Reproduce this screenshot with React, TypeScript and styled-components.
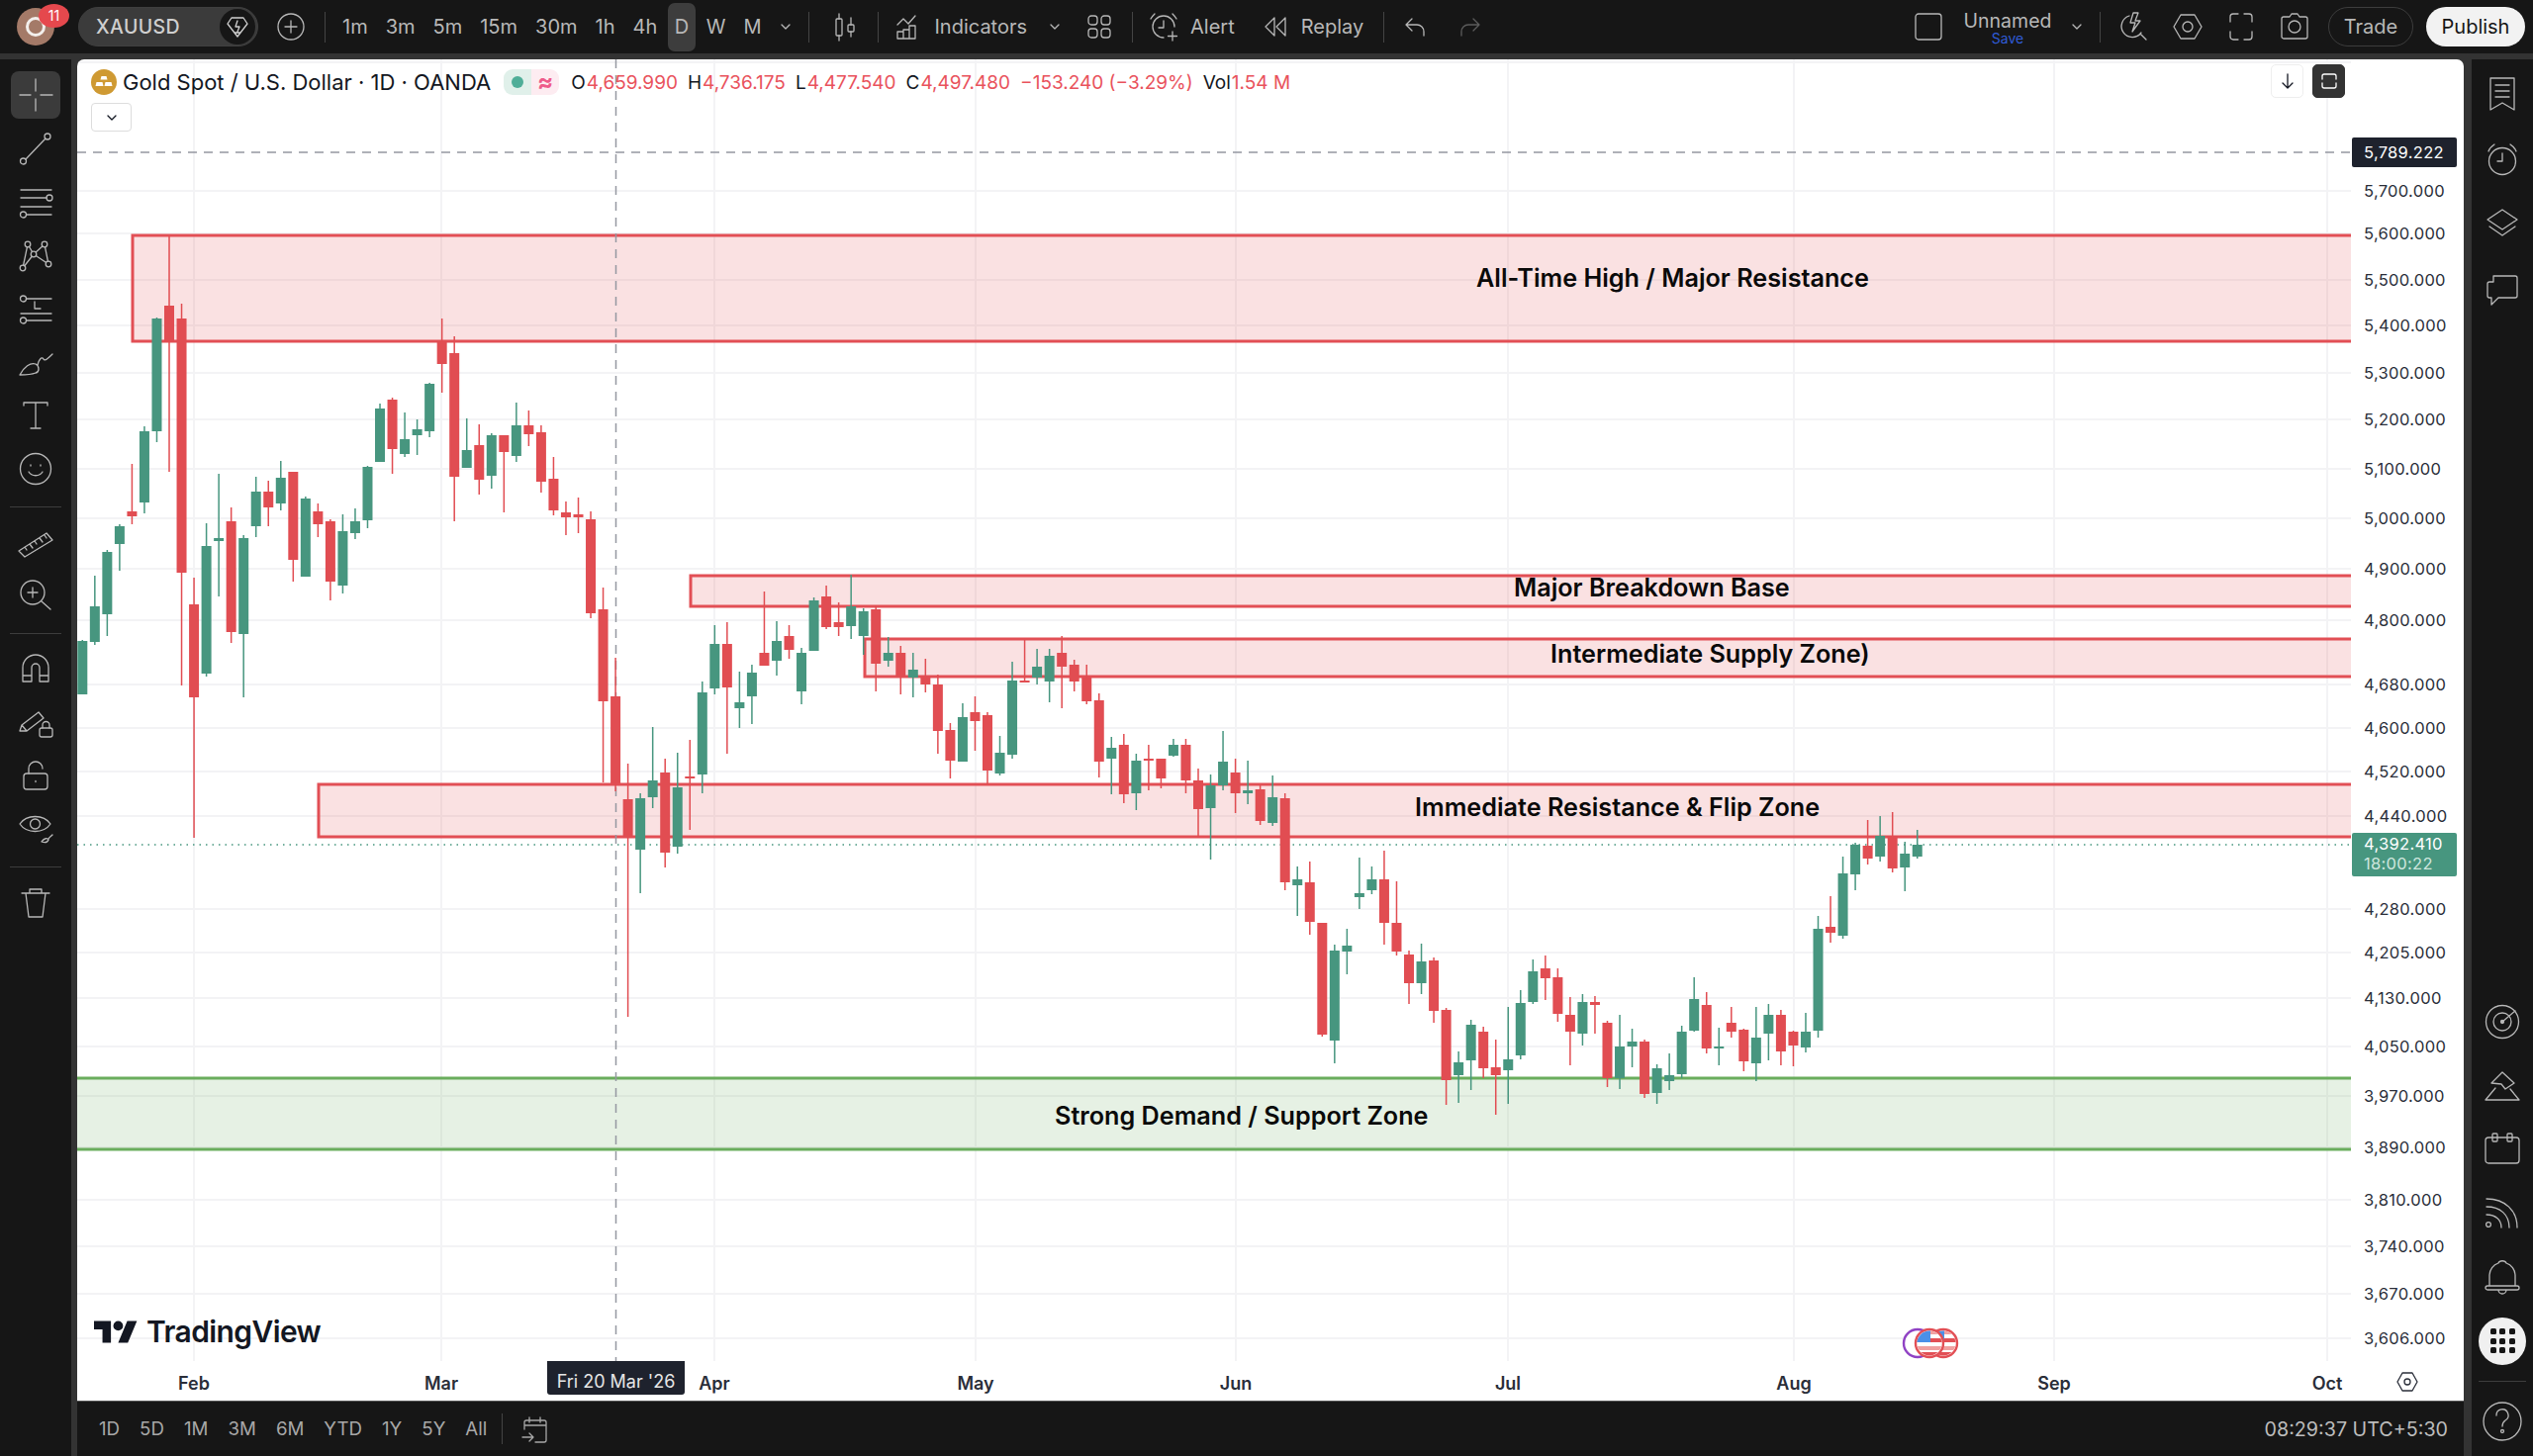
import {Fragment, ReactNode} from "react";
import styled, {createGlobalStyle} from "styled-components";

const GlobalStyle = createGlobalStyle`
  html, body, #root {
    margin: 0;
    height: 100%;
    background: #333333;
    font-family: Inter, "Noto Sans", sans-serif;
  }
`

const Page = styled.div`
  display: flex;
  flex-direction: column;
  width: 2560px;
  height: 1472px;
  overflow: hidden;
  background: #333333;
`

/* top bar */

const TopBar = styled.header`
  display: flex;
  align-items: center;
  flex: 0 0 54px;
  margin-bottom: 6px;
  padding-left: 17px;
  background: #161616;
  color: #b8b8b8;
  font-size: 20px;
`

const Avatar = styled.div`
  position: relative;
  flex: 0 0 38px;
  height: 38px;
  margin-right: 24px;
  border-radius: 50%;
  background: #a47a68;
  display: flex;
  align-items: center;
  justify-content: center;
`

const AvatarRing = styled.div`
  width: 14px;
  height: 14px;
  border: 3px solid #f3efec;
  border-radius: 50%;
`

const CountBadge = styled.span`
  position: absolute;
  left: 22px;
  top: -4px;
  width: 31px;
  height: 24px;
  border-radius: 50%;
  background: #e5484d;
  color: #ffffff;
  font-size: 14px;
  line-height: 24px;
  text-align: center;
`

const SymbolPill = styled.div`
  display: flex;
  align-items: center;
  justify-content: space-between;
  flex: 0 0 182px;
  height: 40px;
  box-sizing: border-box;
  margin-right: 19px;
  padding: 0 2px 0 17px;
  border-radius: 20px;
  border: 1px solid #3f3f3f;
  background: #3b3b3b;
  color: #cfcfcf;
  font-size: 19.500px;
  font-weight: 500;
  letter-spacing: .4px;
`

const FavCircle = styled.div`
  display: flex;
  align-items: center;
  justify-content: center;
  width: 36px;
  height: 36px;
  border-radius: 50%;
  background: #161616;
  color: #d0d0d0;
`

const Sep = styled.div<{$l?: number; $r?: number}>`
  flex: 0 0 1px;
  height: 31px;
  margin-left: ${props => props.$l ?? 0}px;
  margin-right: ${props => props.$r ?? 0}px;
  background: #444444;
`

const IntervalButton = styled.div<{$active?: boolean}>`
  display: flex;
  align-items: center;
  height: 49px;
  padding: 0 ${props => props.$active ? 6.5 : 9}px;
  margin: 0 ${props => props.$active ? 2 : 0}px;
  border-radius: 7px;
  background: ${props => props.$active ? "#3d3d3d" : "transparent"};
`

const ToolItem = styled.div<{$l?: number; $r?: number; $dim?: boolean}>`
  display: flex;
  align-items: center;
  gap: 12px;
  margin-left: ${props => props.$l ?? 0}px;
  margin-right: ${props => props.$r ?? 0}px;
  color: ${props => props.$dim ? "#5c5c5c" : "inherit"};
`

const RightTools = styled.div`
  display: flex;
  align-items: center;
  margin-left: auto;
  padding-right: 8px;
`

const LayoutName = styled.div`
  display: flex;
  flex-direction: column;
  align-items: center;
  margin-left: 22px;
  width: 88px;
  font-size: 19.500px;
  line-height: 22px;
  margin-top: 2px;
`

const SaveText = styled.span`
  color: #2f5bd6;
  font-size: 14px;
  line-height: 14px;
`

const TradeButton = styled.div`
  display: flex;
  align-items: center;
  justify-content: center;
  width: 86px;
  height: 40px;
  box-sizing: border-box;
  margin-left: 19px;
  border: 1px solid #3d3d3d;
  border-radius: 20px;
`

const PublishButton = styled.div`
  display: flex;
  align-items: center;
  justify-content: center;
  width: 100px;
  height: 40px;
  margin-left: 13px;
  border-radius: 20px;
  background: #f2f2f2;
  color: #161616;
`

/* page body */

const Body = styled.div`
  display: grid;
  grid-template-columns: 72px 1fr 64px;
  column-gap: 6px;
  flex: 1;
  min-height: 0;
`

const LeftRail = styled.nav`
  display: flex;
  flex-direction: column;
  align-items: center;
  padding-top: 9px;
  background: #161616;
  color: #b8b8b8;
`

const RailButton = styled.div<{$active?: boolean}>`
  display: flex;
  align-items: center;
  justify-content: center;
  width: 50px;
  height: 54px;
  position: relative;
  z-index: 0;

  &::before {
    content: "";
    display: ${props => props.$active ? "block" : "none"};
    position: absolute;
    z-index: -1;
    left: 0;
    right: 0;
    top: 3px;
    bottom: 3px;
    border-radius: 8px;
    background: #3b3b3b;
  }
`

const RailSep = styled.div`
  flex: 0 0 1px;
  width: 52px;
  margin: 11px 0 8px;
  background: #3d3d3d;
`

const RightRail = styled.aside`
  display: flex;
  flex-direction: column;
  align-items: center;
  padding: 3px 0 3px;
  border-left: 2px solid #333333;
  background: #161616;
  color: #b8b8b8;
`

const RightGroup = styled.div<{$push?: boolean; $gap?: number}>`
  display: flex;
  flex-direction: column;
  align-items: center;
  gap: ${props => props.$gap ?? 0}px;
  margin-top: ${props => props.$push ? "auto" : 0};
`

const RightButton = styled.div`
  display: flex;
  align-items: center;
  justify-content: center;
  width: 62px;
  height: 64.500px;
`

const AppsButton = styled.div`
  display: grid;
  grid-template-columns: repeat(3, 6px);
  gap: 3.500px;
  justify-content: center;
  align-content: center;
  width: 48px;
  height: 48px;
  margin: 8px 0;
  border-radius: 50%;
  background: #f0f0f0;
`

const AppsDot = styled.span`
  width: 6px;
  height: 6px;
  border-radius: 1.500px;
  background: #161616;
`

const RightSep = styled.div`
  flex: 0 0 1px;
  width: 48px;
  margin: 8px 0 8px;
  background: #3d3d3d;
`

const Center = styled.main`
  display: flex;
  flex-direction: column;
  min-width: 0;
`

const ChartFrame = styled.section`
  display: flex;
  flex-direction: column;
  flex: 1;
  min-height: 0;
  overflow: hidden;
  border-radius: 7px 7px 0 0;
  border-bottom: 1px solid #555555;
  background: #ffffff;
`

const ChartRow = styled.div`
  display: flex;
  flex: 1;
  min-height: 0;
`

const Pane = styled.div`
  position: relative;
  flex: 0 0 2298px;
  overflow: hidden;
`

const ChartSvg = styled.svg`
  display: block;
  position: absolute;
  inset: 0;
`

const Legend = styled.div`
  position: absolute;
  left: 14px;
  top: 9px;
  display: flex;
  align-items: center;
  height: 28px;
  color: #131722;
  font-size: 19px;
  white-space: nowrap;
`

const LegendTitle = styled.span`
  margin-left: 6px;
  font-size: 22px;
`

const StatusChip = styled.div`
  display: flex;
  width: 56px;
  height: 26px;
  margin: 0 12px 0 13px;
`

const StatusHalf = styled.div<{$bg: string; $fg: string}>`
  flex: 1;
  display: flex;
  align-items: center;
  justify-content: center;
  background: ${props => props.$bg};
  color: ${props => props.$fg};
  font-size: 24px;
  font-weight: 700;
  line-height: 1;

  &:first-child {
    border-radius: 9px 0 0 9px;
  }

  &:last-child {
    border-radius: 0 9px 9px 0;
  }
`

const StatusDot = styled.span`
  width: 12px;
  height: 12px;
  border-radius: 50%;
  background: #4fae98;
`

const OhlcLabel = styled.span<{$l?: number}>`
  margin-left: ${props => props.$l ?? 10}px;
  margin-right: 1px;
`

const OhlcValue = styled.span`
  color: #e9525c;
`

const CollapseButton = styled.div`
  position: absolute;
  left: 14px;
  top: 44px;
  display: flex;
  align-items: center;
  justify-content: center;
  width: 41px;
  height: 29px;
  box-sizing: border-box;
  border: 1px solid #dddddd;
  border-radius: 4px;
  background: #ffffff;
  color: #131722;
`

const PaneButton = styled.div<{$dark?: boolean; $right: number}>`
  position: absolute;
  right: ${props => props.$right}px;
  top: 5px;
  display: flex;
  align-items: center;
  justify-content: center;
  width: 33px;
  height: 34px;
  box-sizing: border-box;
  border: 1px solid ${props => props.$dark ? "#333333" : "#eeeeee"};
  border-radius: 5px;
  background: ${props => props.$dark ? "#333333" : "#ffffff"};
  color: ${props => props.$dark ? "#ffffff" : "#131722"};
`

const ZoneLabel = styled.div`
  position: absolute;
  transform: translateY(-50%);
  color: #0a0a0a;
  font-size: 25.200px;
  font-weight: 600;
  white-space: nowrap;
`

const Watermark = styled.div`
  position: absolute;
  left: 17px;
  bottom: 12px;
  display: flex;
  align-items: center;
  gap: 9px;
  color: #131722;
  font-size: 30px;
  font-weight: 600;
  letter-spacing: -.6px;
`

const PriceAxis = styled.div`
  position: relative;
  flex: 1;
  color: #2a2e39;
  font-size: 16.500px;
  letter-spacing: .3px;
`

const PriceTick = styled.span`
  position: absolute;
  left: 13px;
  transform: translateY(-50%);
`

const CrossPriceTag = styled.div`
  position: absolute;
  left: 1px;
  top: 79px;
  width: 106px;
  height: 30px;
  padding-left: 12px;
  box-sizing: border-box;
  border-radius: 2px;
  background: #1e222d;
  color: #ffffff;
  line-height: 30px;
`

const LastPriceTag = styled.div`
  position: absolute;
  left: 1px;
  top: 782px;
  width: 106px;
  height: 44px;
  padding: 1px 0 0 12px;
  box-sizing: border-box;
  border-radius: 2px;
  background: #47967f;
  color: #ffffff;
  line-height: 20px;
`

const Countdown = styled.div`
  color: #cfe6de;
`

const TimeAxis = styled.div`
  position: relative;
  flex: 0 0 40px;
  color: #2a2e39;
  font-size: 18px;
  font-weight: 600;
`

const TimeTick = styled.span`
  position: absolute;
  top: 22px;
  transform: translate(-50%, -50%);
`

const CrossDateTag = styled.div`
  position: absolute;
  left: 475px;
  top: 0;
  width: 139px;
  height: 34px;
  padding-top: 8px;
  box-sizing: border-box;
  border-radius: 0 0 3px 3px;
  background: #1e222d;
  color: #e6e6e6;
  font-size: 18px;
  font-weight: 400;
  line-height: 26px;
  text-align: center;
`

const AxisGear = styled.div`
  position: absolute;
  left: 2344px;
  top: 10px;
  color: #2a2e39;
`

const BottomBar = styled.footer`
  display: flex;
  align-items: center;
  flex: 0 0 55px;
  padding: 0 16px 0 12px;
  background: #161616;
  color: #a8a8a8;
  font-size: 18.700px;
`

const RangeButton = styled.span`
  padding: 0 10px;
`

const Clock = styled.div`
  margin-left: auto;
  color: #bdbdbd;
  font-size: 19.700px;
`

/* drawn icons, 36 units square unless said otherwise */

const Ico = ({children, size = 36, box = 36}: {children: ReactNode, size?: number, box?: number}) => (
    <svg width={size} height={size} viewBox={`0 0 ${box} ${box}`} fill="none" stroke="currentColor"
         strokeWidth={box / size * 1.3} strokeLinecap="round" strokeLinejoin="round">
        {children}
    </svg>
)

const Chevron = () => (
    <Ico size={18} box={18}><path d="M5 7l4 4 4-4"/></Ico>
)

const leftTools: ReactNode[][] = [
    [<path key="a" d="M2 18h11M23 18h12M18 2v12M18 22v12"/>],
    [<path key="a" d="M8 29L28 8"/>, <circle key="b" cx="5.500" cy="31" r="3"/>, <circle key="c" cx="30" cy="6" r="3"/>],
    [<path key="a" d="M3 6H34M3 14H29M3 23H34M9 31H34"/>, <circle key="b" cx="32" cy="14" r="3"/>, <circle key="c" cx="5.500" cy="31" r="3"/>],
    [<path key="a" d="M10 7L5 31M10 7L16 17M16 17L27 7M27 7L31 27M16 17L31 27M5 31L16 17"/>,
        <circle key="b" cx="10" cy="7" r="2.800" fill="#161616"/>, <circle key="c" cx="27" cy="7" r="2.800" fill="#161616"/>,
        <circle key="d" cx="5" cy="31" r="2.800" fill="#161616"/>, <circle key="e" cx="31" cy="27" r="2.800" fill="#161616"/>,
        <circle key="f" cx="16" cy="17" r="2.800" fill="#161616"/>],
    [<path key="a" d="M9 8H34M3 23H34M9 30H34M17 11v7h6"/>, <circle key="b" cx="5.500" cy="8" r="3"/>, <circle key="c" cx="5.500" cy="30" r="3"/>],
    [<path key="a" d="M2 31C6 23 13 18 18 20c4 2 4 8 0 9-5 2-12 2-16 2zM20 21c1-5 4-9 6-6 1 3 6-2 9-5"/>],
    [<path key="a" d="M6 8V5H30V8M18 5V31M13 31H23"/>],
    [<circle key="a" cx="18" cy="18" r="15.500"/>, <path key="b" d="M11 21c3 5 11 5 14 0M13 14v1M23 14v1"/>],
    [<path key="a" d="M1 27L29 9l6 7L7 33zM7 23l2 3M12 20l3 4M17 17l2 3M22 14l3 4M27 11l2 3"/>],
    [<circle key="a" cx="15" cy="15" r="12"/>, <path key="b" d="M24 24l9 8M15 10v10M10 15h10"/>],
    [<path key="a" d="M5 31V17a13 13 0 0 1 26 0V31H22V17a4 4 0 0 0-8 0V31zM5 25h9M22 25h9"/>],
    [<path key="a" d="M2 27l2-6L21 8l5 6L9 27zM4 21l5 6"/>, <rect key="b" x="22" y="24" width="13" height="9" rx="2"/>, <path key="c" d="M25 24v-3a3.500 3.500 0 0 1 7 0v3"/>],
    [<rect key="a" x="6" y="16" width="24" height="16" rx="3"/>, <path key="b" d="M11 16v-5a7 7 0 0 1 14 0M18 23.500v1"/>],
    [<path key="a" d="M2 13C9 3 26 3 33 13 26 23 9 23 2 13zM24 31c3-4 6-4 7-2-1 3-4 3-7 2zM31 28c1-2 3-3 4-4"/>, <circle key="b" cx="17.500" cy="13" r="5"/>],
    [<path key="a" d="M4 9H32M12 9V5H24V9M8 9l3 24H25l3-24"/>],
]

const rightTopTools: ReactNode[] = [
    <path key="a" d="M6 2H30V34L18 27 6 34zM11 9H25M11 15H25M11 21H25"/>,
    <g key="b"><circle cx="18" cy="20" r="13.500"/><path d="M18 12v8h-5M4 10c1-3 3-5 6-7M32 10c-1-3-3-5-6-7"/></g>,
    <path key="c" d="M18 3l15 10-15 10L3 13zM5 20l13 9 13-9"/>,
    <path key="d" d="M9 4h22a2 2 0 0 1 2 2v18a2 2 0 0 1-2 2H14l-7 7v-7H5a2 2 0 0 1-2-2V12a2 2 0 0 1 2-2h4zM9 4v6"/>,
]

const rightBottomTools: ReactNode[] = [
    <g key="a"><circle cx="18" cy="18" r="16.500"/><circle cx="18" cy="18" r="9"/><circle cx="18" cy="18" r="1.500" fill="currentColor"/><path d="M18 18L31 7"/></g>,
    <path key="b" d="M7 15L18 4l12 11-9 6-4-5zM11 20L1 32H35l-9-11"/>,
    <g key="c"><rect x="1" y="6" width="34" height="26" rx="3"/><rect x="8" y="2" width="5" height="8" rx="1"/><rect x="23" y="2" width="5" height="8" rx="1"/></g>,
    <g key="d"><circle cx="4" cy="29" r="2.400"/><path d="M2 19c9 0 15 5 15 13M2 11c14 0 23 8 23 21M2 3c19 0 31 12 31 29"/></g>,
    <path key="e" d="M5 27V16a13 13 0 0 1 9-12c1-3 7-3 8 0a13 13 0 0 1 9 12v11M3 27h30a1 1 0 0 1 0 4H3a1 1 0 0 1 0-4zM14 31a4 4 0 0 0 8 0"/>,
]

const GoldBadge = () => (
    <svg width="26" height="26" viewBox="0 0 26 26">
        <circle cx="13" cy="13" r="13" fill="#cf9a33"/>
        <path d="M10.500 7h5l1 3.600h-7zM5.500 13h6l1 4h-8zM14.500 13h6l1 4h-8z" fill="#ffffff"/>
    </svg>
)

/* chart data, in pixels of the 2560x1472 page */

type Candle = ["g" | "r", number, number, number, number]

const candles: Candle[] = [
    ["g", 647, 648, 702, 702], ["g", 582, 613, 649, 652], ["g", 556, 558, 621, 643], ["g", 530, 532, 550, 577],
    ["r", 469, 517, 522, 530], ["g", 431, 436, 508, 519], ["g", 321, 322, 436, 447], ["r", 239, 309, 346, 477],
    ["r", 307, 322, 579, 693], ["r", 584, 611, 705, 847], ["g", 529, 552, 681, 684], ["g", 479, 544, 547, 603],
    ["r", 513, 527, 639, 650], ["g", 541, 544, 641, 705], ["g", 482, 497, 532, 543], ["r", 486, 497, 513, 532],
    ["g", 466, 483, 509, 516], ["r", 477, 477, 566, 588], ["g", 502, 504, 583, 583], ["r", 509, 517, 530, 543],
    ["r", 525, 527, 588, 607], ["g", 520, 537, 592, 600], ["g", 514, 527, 539, 545], ["g", 471, 472, 526, 534],
    ["g", 408, 413, 467, 467], ["r", 402, 404, 454, 479], ["g", 417, 444, 459, 462], ["g", 424, 434, 440, 460],
    ["g", 387, 388, 436, 442], ["r", 322, 345, 368, 397], ["r", 340, 357, 482, 527], ["g", 423, 455, 473, 473],
    ["r", 429, 450, 485, 500], ["g", 438, 440, 481, 494], ["r", 440, 440, 457, 518], ["g", 407, 430, 461, 467],
    ["r", 415, 430, 439, 451], ["r", 430, 437, 487, 498], ["r", 462, 484, 516, 521], ["r", 507, 518, 523, 541],
    ["r", 503, 520, 523, 539], ["r", 517, 525, 620, 625], ["r", 594, 616, 709, 791], ["r", 665, 704, 792, 800],
    ["r", 772, 808, 847, 1028], ["g", 802, 807, 859, 903], ["g", 735, 789, 806, 817], ["r", 767, 781, 862, 877],
    ["g", 761, 796, 856, 863], ["r", 748, 785, 786, 839], ["g", 689, 700, 783, 802], ["g", 632, 651, 696, 702],
    ["r", 629, 651, 695, 762], ["g", 679, 710, 716, 736], ["g", 672, 680, 704, 732], ["r", 598, 660, 673, 673],
    ["g", 628, 648, 668, 683], ["r", 632, 643, 657, 666], ["g", 655, 660, 699, 712], ["g", 604, 607, 658, 658],
    ["r", 592, 603, 634, 636], ["r", 609, 629, 634, 643], ["g", 581, 613, 633, 646], ["g", 615, 618, 643, 662],
    ["r", 612, 616, 671, 699], ["g", 644, 660, 668, 674], ["r", 653, 660, 684, 702], ["g", 660, 677, 685, 705],
    ["r", 666, 684, 692, 700], ["r", 682, 692, 739, 762], ["r", 731, 738, 769, 787], ["g", 711, 725, 770, 770],
    ["r", 704, 720, 729, 759], ["r", 720, 723, 779, 793], ["g", 744, 761, 782, 784], ["g", 669, 688, 763, 767],
    ["r", 647, 688, 689, 690], ["g", 656, 674, 685, 692], ["g", 656, 663, 689, 710], ["r", 643, 660, 674, 716],
    ["r", 667, 672, 689, 699], ["r", 672, 685, 709, 712], ["r", 701, 708, 770, 786], ["g", 745, 756, 767, 803],
    ["r", 742, 753, 803, 812], ["g", 762, 769, 802, 819], ["r", 753, 767, 768, 799], ["r", 767, 767, 787, 797],
    ["g", 747, 753, 764, 765], ["r", 747, 753, 789, 802], ["r", 777, 789, 818, 847], ["g", 783, 794, 817, 869],
    ["g", 739, 770, 794, 799], ["r", 767, 781, 802, 822], ["g", 769, 799, 802, 813], ["r", 794, 798, 830, 834],
    ["g", 784, 806, 832, 835], ["r", 802, 807, 892, 900], ["g", 876, 889, 895, 926], ["r", 871, 892, 932, 945],
    ["r", 933, 933, 1046, 1048], ["g", 955, 961, 1052, 1075], ["g", 939, 956, 962, 985], ["g", 867, 903, 907, 919],
    ["g", 876, 889, 900, 904], ["r", 860, 889, 933, 955], ["r", 891, 933, 962, 966], ["r", 961, 965, 994, 1015],
    ["g", 954, 972, 994, 1005], ["r", 968, 971, 1022, 1034], ["r", 1019, 1021, 1092, 1117], ["g", 1063, 1074, 1087, 1115],
    ["g", 1031, 1036, 1072, 1102], ["r", 1038, 1043, 1080, 1090], ["r", 1051, 1079, 1087, 1127], ["g", 1018, 1071, 1082, 1116],
    ["g", 1001, 1014, 1067, 1071], ["g", 970, 982, 1013, 1015], ["r", 966, 979, 989, 1011], ["r", 979, 988, 1025, 1033],
    ["r", 1008, 1026, 1043, 1077], ["g", 1005, 1013, 1045, 1057], ["r", 1007, 1013, 1016, 1045], ["r", 1032, 1034, 1090, 1099],
    ["g", 1026, 1058, 1090, 1101], ["g", 1040, 1053, 1058, 1079], ["r", 1051, 1053, 1106, 1110], ["g", 1076, 1080, 1105, 1116],
    ["g", 1065, 1087, 1093, 1102], ["g", 1037, 1043, 1086, 1090], ["g", 988, 1010, 1042, 1043], ["r", 1003, 1016, 1060, 1065],
    ["g", 1039, 1058, 1060, 1077], ["r", 1018, 1034, 1043, 1049], ["r", 1040, 1041, 1073, 1083], ["g", 1018, 1049, 1075, 1093],
    ["g", 1015, 1026, 1045, 1072], ["r", 1021, 1026, 1063, 1077], ["r", 1042, 1043, 1057, 1078], ["g", 1024, 1043, 1059, 1064],
    ["g", 926, 939, 1042, 1049], ["r", 906, 937, 943, 953], ["g", 866, 883, 946, 949], ["g", 852, 854, 884, 900],
    ["r", 829, 855, 868, 874], ["g", 825, 845, 866, 871], ["r", 821, 845, 878, 882], ["g", 851, 863, 877, 901],
    ["g", 839, 854, 866, 868],
]

const candleX = (i: number) => 83.3 + i * 12.53

const priceTicks: [string, number][] = [
    ["5,700.000", 193], ["5,600.000", 236], ["5,500.000", 283], ["5,400.000", 329], ["5,300.000", 377],
    ["5,200.000", 424], ["5,100.000", 474], ["5,000.000", 524], ["4,900.000", 575], ["4,800.000", 627],
    ["4,680.000", 692], ["4,600.000", 736], ["4,520.000", 780], ["4,440.000", 825], ["4,280.000", 919],
    ["4,205.000", 963], ["4,130.000", 1009], ["4,050.000", 1058], ["3,970.000", 1108], ["3,890.000", 1160],
    ["3,810.000", 1213], ["3,740.000", 1260], ["3,670.000", 1308], ["3,606.000", 1353],
]

const monthTicks: [string, number][] = [
    ["Feb", 196], ["Mar", 446], ["Apr", 722], ["May", 986], ["Jun", 1249],
    ["Jul", 1524], ["Aug", 1813], ["Sep", 2076], ["Oct", 2352],
]

type Zone = {x: number, top: number, bottom: number, tone: "red" | "green"}

const zones: Zone[] = [
    {x: 134, top: 238, bottom: 345, tone: "red"},
    {x: 698, top: 582, bottom: 613, tone: "red"},
    {x: 874, top: 646, bottom: 684, tone: "red"},
    {x: 322, top: 793, bottom: 846, tone: "red"},
    {x: 60, top: 1090, bottom: 1162, tone: "green"},
]

const zoneLabels: [string, number, number][] = [
    ["All-Time High / Major Resistance", 1492, 281],
    ["Major Breakdown Base", 1530, 594],
    ["Intermediate Supply Zone)", 1567, 661],
    ["Immediate Resistance & Flip Zone", 1430, 816],
    ["Strong Demand / Support Zone", 1066, 1128],
]

const tones = {
    red: {line: "#e24f55", fill: "rgba(226,79,85,.17)"},
    green: {line: "#6aad5d", fill: "rgba(106,173,93,.17)"},
}

const FlagCoin = ({cx, id}: {cx: number, id: string}) => (
    <g>
        <clipPath id={id}><circle cx={cx} cy={1358} r={12.5}/></clipPath>
        <circle cx={cx} cy={1358} r={14} fill="#ffffff" stroke="#e24f55" strokeWidth={2.4}/>
        <g clipPath={`url(#${id})`}>
            <rect x={cx - 13} y={1345} width={26} height={4} fill="#f0a0a0"/>
            <rect x={cx - 13} y={1353} width={26} height={4} fill="#e24f55"/>
            <rect x={cx - 13} y={1361} width={26} height={4} fill="#f0a0a0"/>
            <rect x={cx - 13} y={1367} width={26} height={5} fill="#e24f55"/>
            <rect x={cx - 13} y={1344} width={14} height={13} fill="#4a90e8"/>
        </g>
    </g>
)

const Chart = () => (
    <ChartSvg width="2298" height="1316" viewBox="78 60 2298 1316">
        <g stroke="#f3f3f5" strokeWidth="2">
            <path d="M78 63H2376"/>
            {priceTicks.map(([label, y]) => <path key={label} d={`M78 ${y}H2376`}/>)}
            {monthTicks.map(([label, x]) => <path key={label} d={`M${x} 60V1376`}/>)}
        </g>

        {zones.map(zone => (
            <rect key={zone.top} x={zone.x} y={zone.top} width={2440 - zone.x} height={zone.bottom - zone.top}
                  fill={tones[zone.tone].fill} stroke={tones[zone.tone].line} strokeWidth="3"/>
        ))}

        <path d="M78 854H2376" stroke="#47967f" strokeWidth="1.5" strokeDasharray="1.5 5"/>
        <path d="M78 154H2376" stroke="#9598a1" strokeWidth="1.5" strokeDasharray="9 7"/>
        <path d="M622.5 60V1376" stroke="#9598a1" strokeWidth="1.5" strokeDasharray="9 7"/>

        {candles.map(([tone, high, top, bottom, low], i) => {
            const x = candleX(i)
            const color = tone === "g" ? "#47967f" : "#e14d52"
            return (
                <g key={i} fill={color}>
                    <rect x={x - .75} y={high} width="1.5" height={low - high}/>
                    <rect x={x - 5} y={top} width="10" height={Math.max(bottom - top, 2)}/>
                </g>
            )
        })}

        <circle cx={1938} cy={1358} r={14} fill="#ffffff" stroke="#9042c4" strokeWidth={2.4}/>
        <FlagCoin cx={1964} id="flag-right"/>
        <FlagCoin cx={1950} id="flag-mid"/>
    </ChartSvg>
)

const App = () => {
    return (
        <Page>
            <GlobalStyle/>

            <TopBar>
                <Avatar>
                    <AvatarRing/>
                    <CountBadge>11</CountBadge>
                </Avatar>
                <SymbolPill>
                    XAUUSD
                    <FavCircle>
                        <Ico size={24} box={24}><path d="M6 3h12l4 6-10 13L2 9zM12 6l-2 6h4l-2 5M9 18h6"/></Ico>
                    </FavCircle>
                </SymbolPill>
                <Ico size={28} box={28}><circle cx="14" cy="14" r="13"/><path d="M14 8v12M8 14h12"/></Ico>
                <Sep $l={20} $r={8}/>
                {["1m", "3m", "5m", "15m", "30m", "1h", "4h"].map(item => (
                    <IntervalButton key={item}>{item}</IntervalButton>
                ))}
                <IntervalButton $active>D</IntervalButton>
                <IntervalButton>W</IntervalButton>
                <IntervalButton>M</IntervalButton>
                <ToolItem $l={7}><Chevron/></ToolItem>
                <Sep $l={14} $r={21}/>
                <Ico size={30} box={30}>
                    <path d="M9 2v5M9 24v5M21 6v7M21 20v5"/>
                    <rect x="6" y="7" width="6" height="17" rx="1"/>
                    <rect x="18" y="13" width="6" height="7" rx="1"/>
                </Ico>
                <Sep $l={18} $r={18}/>
                <ToolItem>
                    <Ico size={26} box={26}>
                        <path d="M1 11l6-6 5 5 7-8M1 25v-7h6v7zM7 25v-9h6v9zM13 25v-13h6v13z"/>
                    </Ico>
                    Indicators
                </ToolItem>
                <ToolItem $l={19}><Chevron/></ToolItem>
                <ToolItem $l={23}>
                    <Ico size={26} box={26}>
                        <rect x="2" y="2" width="9" height="9" rx="3"/><rect x="15" y="2" width="9" height="9" rx="3"/>
                        <rect x="2" y="15" width="9" height="9" rx="3"/><rect x="15" y="15" width="9" height="9" rx="3"/>
                    </Ico>
                </ToolItem>
                <Sep $l={20} $r={16}/>
                <ToolItem $r={27}>
                    <Ico size={30} box={30}>
                        <path d="M15 26a11 11 0 1 1 11-11M15 9v7h-5M2 7c1-2 2-3 4-5M28 7c-1-2-2-3-4-5M24 20v9M19.500 24.500h9"/>
                    </Ico>
                    Alert
                </ToolItem>
                <ToolItem>
                    <Ico size={28} box={28}>
                        <path d="M13 5L4 14l9 9zM24 5l-9 9 9 9z"/>
                    </Ico>
                    Replay
                </ToolItem>
                <Sep $l={20} $r={20}/>
                <Ico size={22} box={22}><path d="M8 3L2 9l6 6M2 9h11a7 7 0 0 1 7 7v4"/></Ico>
                <ToolItem $l={34} $dim>
                    <Ico size={22} box={22}><path d="M14 3l6 6-6 6M20 9H9a7 7 0 0 0-7 7v4"/></Ico>
                </ToolItem>

                <RightTools>
                    <Ico size={28} box={28}><rect x="1" y="1" width="26" height="26" rx="3"/></Ico>
                    <LayoutName>
                        Unnamed
                        <SaveText>Save</SaveText>
                    </LayoutName>
                    <ToolItem $l={17}><Chevron/></ToolItem>
                    <Sep $l={14} $r={18}/>
                    <ToolItem $r={25}>
                        <Ico size={30} box={30}>
                            <path d="M11 4a11 11 0 1 0 12 17M22 22l6 6M15 1l-3 10h5l-3 9 8-11h-5l3-8z"/>
                        </Ico>
                    </ToolItem>
                    <ToolItem $r={24}>
                        <Ico size={30} box={30}>
                            <path d="M8 3h14l7 12-7 12H8L1 15z"/>
                            <circle cx="15" cy="15" r="5"/>
                        </Ico>
                    </ToolItem>
                    <ToolItem $r={24}>
                        <Ico size={30} box={30}>
                            <path d="M12 2H7a3 3 0 0 0-3 3v5M18 2h5a3 3 0 0 1 3 3v5M12 28H7a3 3 0 0 1-3-3v-5M18 28h5a3 3 0 0 0 3-3v-5"/>
                        </Ico>
                    </ToolItem>
                    <Ico size={30} box={30}>
                        <path d="M10 5l2-3h6l2 3h6a2 2 0 0 1 2 2v18a2 2 0 0 1-2 2H4a2 2 0 0 1-2-2V7a2 2 0 0 1 2-2z"/>
                        <circle cx="15" cy="15" r="6"/>
                    </Ico>
                    <TradeButton>Trade</TradeButton>
                    <PublishButton>Publish</PublishButton>
                </RightTools>
            </TopBar>

            <Body>
                <LeftRail>
                    {leftTools.map((tool, i) => (
                        <Fragment key={i}>
                            {(i === 8 || i === 10 || i === 14) && <RailSep/>}
                            <RailButton $active={i === 0}><Ico>{tool}</Ico></RailButton>
                        </Fragment>
                    ))}
                </LeftRail>

                <Center>
                    <ChartFrame>
                        <ChartRow>
                            <Pane>
                                <Chart/>
                                <Legend>
                                    <GoldBadge/>
                                    <LegendTitle>Gold Spot / U.S. Dollar · 1D · OANDA</LegendTitle>
                                    <StatusChip>
                                        <StatusHalf $bg="#e0f0ea" $fg="#4fae98"><StatusDot/></StatusHalf>
                                        <StatusHalf $bg="#fdecf1" $fg="#ee5a8a">≈</StatusHalf>
                                    </StatusChip>
                                    <OhlcLabel $l={0}>O</OhlcLabel><OhlcValue>4,659.990</OhlcValue>
                                    <OhlcLabel>H</OhlcLabel><OhlcValue>4,736.175</OhlcValue>
                                    <OhlcLabel>L</OhlcLabel><OhlcValue>4,477.540</OhlcValue>
                                    <OhlcLabel>C</OhlcLabel><OhlcValue>4,497.480</OhlcValue>
                                    <OhlcLabel $l={9}/><OhlcValue>−153.240 (−3.29%)</OhlcValue>
                                    <OhlcLabel>Vol</OhlcLabel><OhlcValue>1.54 M</OhlcValue>
                                </Legend>
                                <CollapseButton><Chevron/></CollapseButton>
                                <PaneButton $right={48}>
                                    <Ico size={18} box={18}><path d="M9 2v14M4 11l5 5 5-5"/></Ico>
                                </PaneButton>
                                <PaneButton $dark $right={6}>
                                    <Ico size={20} box={20}>
                                        <path d="M3 8V5a2 2 0 0 1 2-2h10a2 2 0 0 1 2 2v3M3 12v3a2 2 0 0 0 2 2h10a2 2 0 0 0 2-2v-3"/>
                                    </Ico>
                                </PaneButton>
                                {zoneLabels.map(([label, x, y]) => (
                                    <ZoneLabel key={label} style={{left: x - 78, top: y - 60}}>{label}</ZoneLabel>
                                ))}
                                <Watermark>
                                    <svg width="44" height="23" viewBox="0 4 36 18" fill="currentColor">
                                        <path d="M14 22H7V11H0V4h14v18zM28 22h-8l7.500-18h8L28 22z"/>
                                        <circle cx="20" cy="8" r="4"/>
                                    </svg>
                                    TradingView
                                </Watermark>
                            </Pane>
                            <PriceAxis>
                                {priceTicks.map(([label, y]) => (
                                    <PriceTick key={label} style={{top: y - 60}}>{label}</PriceTick>
                                ))}
                                <CrossPriceTag>5,789.222</CrossPriceTag>
                                <LastPriceTag>
                                    4,392.410
                                    <Countdown>18:00:22</Countdown>
                                </LastPriceTag>
                            </PriceAxis>
                        </ChartRow>
                        <TimeAxis>
                            {monthTicks.map(([label, x]) => (
                                <TimeTick key={label} style={{left: x - 78}}>{label}</TimeTick>
                            ))}
                            <CrossDateTag>Fri 20 Mar &apos;26</CrossDateTag>
                            <AxisGear>
                                <Ico size={22} box={22}>
                                    <path d="M6 2h10l5 9-5 9H6l-5-9z"/>
                                    <circle cx="11" cy="11" r="3"/>
                                </Ico>
                            </AxisGear>
                        </TimeAxis>
                    </ChartFrame>

                    <BottomBar>
                        {["1D", "5D", "1M", "3M", "6M", "YTD", "1Y", "5Y", "All"].map(range => (
                            <RangeButton key={range}>{range}</RangeButton>
                        ))}
                        <Sep $l={5} $r={18}/>
                        <Ico size={28} box={28}>
                            <path d="M4 14V7a2 2 0 0 1 2-2h18a2 2 0 0 1 2 2v18a2 2 0 0 1-2 2H15M4 10h22M9 2v5M20 2v5M2 22h11M9 18l4 4-4 4"/>
                        </Ico>
                        <Clock>08:29:37 UTC+5:30</Clock>
                    </BottomBar>
                </Center>

                <RightRail>
                    <RightGroup $gap={1.5}>
                        {rightTopTools.map((tool, i) => (
                            <RightButton key={i}><Ico>{tool}</Ico></RightButton>
                        ))}
                    </RightGroup>
                    <RightGroup $push>
                        {rightBottomTools.map((tool, i) => (
                            <RightButton key={i}><Ico>{tool}</Ico></RightButton>
                        ))}
                        <AppsButton>
                            {Array.from({length: 9}).map((_, i) => <AppsDot key={i}/>)}
                        </AppsButton>
                        <RightSep/>
                        <RightButton>
                            <Ico size={40} box={40}>
                                <circle cx="20" cy="20" r="19"/>
                                <path d="M14 14a6 6 0 1 1 9 5c-2 1.500-3 3-3 6"/>
                                <circle cx="20" cy="30" r="1.500"/>
                            </Ico>
                        </RightButton>
                    </RightGroup>
                </RightRail>
            </Body>
        </Page>
    )
}

export default App;
